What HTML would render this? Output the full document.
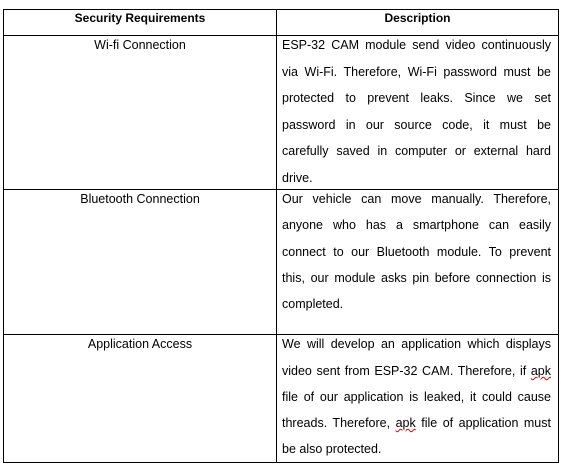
<!DOCTYPE html>
<html><head><style>
html,body{margin:0;padding:0;background:#fff;width:561px;height:466px;overflow:hidden}
body{position:relative;font-family:"Liberation Sans",sans-serif;font-size:12.5px;color:#000}
.h{position:absolute;background:#000;height:1px}
.v{position:absolute;background:#000;width:1px}
.t{position:absolute;line-height:14px;white-space:nowrap}
.c{text-align:center}
.j{position:absolute;left:282px;width:269px;line-height:14px;text-align:justify;text-align-last:justify;white-space:nowrap}
.l{text-align-last:left}
b{font-weight:bold;font-size:12px}
.sq{text-decoration:underline wavy #d00;text-decoration-thickness:1px}
</style></head><body>
<div class="h" style="left:3px;top:9px;width:556px"></div>
<div class="h" style="left:3px;top:35px;width:556px"></div>
<div class="h" style="left:3px;top:189px;width:556px"></div>
<div class="h" style="left:3px;top:334px;width:556px"></div>
<div class="h" style="left:3px;top:462px;width:556px"></div>
<div class="v" style="left:3px;top:9px;height:454px"></div>
<div class="v" style="left:276px;top:9px;height:454px"></div>
<div class="v" style="left:558px;top:9px;height:454px"></div>

<div class="t c" style="left:4px;width:272px;top:11px"><b>Security Requirements</b></div>
<div class="t c" style="left:277px;width:281px;top:11px"><b>Description</b></div>

<div class="t c" style="left:4px;width:272px;top:38px">Wi-fi Connection</div>
<div class="j" style="top:38px">ESP-32 CAM module send video continuously</div>
<div class="j" style="top:65px">via Wi-Fi. Therefore, Wi-Fi password must be</div>
<div class="j" style="top:91px">protected to prevent leaks. Since we set</div>
<div class="j" style="top:118px">password in our source code, it must be</div>
<div class="j" style="top:144px">carefully saved in computer or external hard</div>
<div class="j l" style="top:171px">drive.</div>

<div class="t c" style="left:4px;width:272px;top:192px">Bluetooth Connection</div>
<div class="j" style="top:192px">Our vehicle can move manually. Therefore,</div>
<div class="j" style="top:218px">anyone who has a smartphone can easily</div>
<div class="j" style="top:245px">connect to our Bluetooth module. To prevent</div>
<div class="j" style="top:271px">this, our module asks pin before connection is</div>
<div class="j l" style="top:297px">completed.</div>

<div class="t c" style="left:4px;width:272px;top:337px">Application Access</div>
<div class="j" style="top:337px">We will develop an application which displays</div>
<div class="j" style="top:364px">video sent from ESP-32 CAM. Therefore, if <span class="sq">apk</span></div>
<div class="j" style="top:390px">file of our application is leaked, it could cause</div>
<div class="j" style="top:416px">threads. Therefore, <span class="sq">apk</span> file of application must</div>
<div class="j l" style="top:442px">be also protected.</div>
</body></html>
